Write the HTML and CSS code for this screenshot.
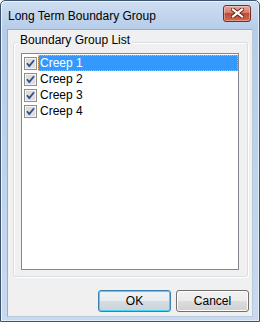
FILE: index.html
```html
<!DOCTYPE html>
<html lang="en">
<head>
  <meta charset="UTF-8">
  <title>Long Term Boundary Group</title>
  <link rel="stylesheet" href="styles.css">
</head>
<body>

  <div class="window">
    <div class="titlebar">
      <span class="title">Long Term Boundary Group</span>
      <button class="close" title="Close">
        <svg width="13" height="10" viewBox="0 0 13 10">
          <path d="M2 1.5 L11 8.5 M11 1.5 L2 8.5" stroke="#6b1f15" stroke-width="4" stroke-linecap="square"/>
          <path d="M2 1.5 L11 8.5 M11 1.5 L2 8.5" stroke="#ffffff" stroke-width="2.2" stroke-linecap="square"/>
        </svg>
      </button>
    </div>

    <div class="client">
      <div class="group">
        <span class="group-label">Boundary Group List</span>
        <ul class="list">
          <li class="item selected">
            <span class="check"><svg width="13" height="13" viewBox="0 0 13 13"><rect x="0.5" y="0.5" width="12" height="12" fill="#f4f4f4" stroke="#8e8f8f"/><rect x="2" y="2" width="9" height="9" fill="#dedede"/><path d="M3 6.2 L5.3 9 L10 3.2" fill="none" stroke="#2f4d8e" stroke-width="1.8"/></svg></span>
            <span class="label">Creep 1</span>
          </li>
          <li class="item">
            <span class="check"><svg width="13" height="13" viewBox="0 0 13 13"><rect x="0.5" y="0.5" width="12" height="12" fill="#f4f4f4" stroke="#8e8f8f"/><rect x="2" y="2" width="9" height="9" fill="#dedede"/><path d="M3 6.2 L5.3 9 L10 3.2" fill="none" stroke="#2f4d8e" stroke-width="1.8"/></svg></span>
            <span class="label">Creep 2</span>
          </li>
          <li class="item">
            <span class="check"><svg width="13" height="13" viewBox="0 0 13 13"><rect x="0.5" y="0.5" width="12" height="12" fill="#f4f4f4" stroke="#8e8f8f"/><rect x="2" y="2" width="9" height="9" fill="#dedede"/><path d="M3 6.2 L5.3 9 L10 3.2" fill="none" stroke="#2f4d8e" stroke-width="1.8"/></svg></span>
            <span class="label">Creep 3</span>
          </li>
          <li class="item">
            <span class="check"><svg width="13" height="13" viewBox="0 0 13 13"><rect x="0.5" y="0.5" width="12" height="12" fill="#f4f4f4" stroke="#8e8f8f"/><rect x="2" y="2" width="9" height="9" fill="#dedede"/><path d="M3 6.2 L5.3 9 L10 3.2" fill="none" stroke="#2f4d8e" stroke-width="1.8"/></svg></span>
            <span class="label">Creep 4</span>
          </li>
        </ul>
      </div>

      <div class="buttons">
        <button class="btn default">OK</button>
        <button class="btn">Cancel</button>
      </div>
    </div>
  </div>

</body>
</html>
```

FILE: styles.css
```css
body {
  margin: 0;
  background: #ffffff;
  font-family: "Liberation Sans", Arial, sans-serif;
  font-size: 12px;
}
.window {
  box-sizing: border-box;
  width: 260px;
  height: 322px;
  border: 1px solid #3d5470;
  border-radius: 5px 5px 0 0;
  padding: 0 6px 4px 6px;
  background: linear-gradient(to bottom, #cfdff2 0, #b6cce8 28px, #c0d4ec 60%, #c8daef 100%);
  box-shadow: inset 1px 1px 0 #eaf2fb, inset -1px -1px 0 #e2ecf7;
}
.titlebar {
  display: flex;
  align-items: center;
  height: 28px;
}
.title {
  padding-left: 1px;
  color: #000;
  line-height: 14px;
  margin-top: 1px;
}
.close {
  margin-left: auto;
  margin-right: 2px;
  margin-top: -4px;
  width: 28px;
  height: 17px;
  padding: 0;
  border: 1px solid #7a2a20;
  border-radius: 3px;
  background: linear-gradient(to bottom, #e8a799 0, #d77b6a 45%, #c24a35 50%, #cf6a50 100%);
  box-shadow: inset 0 0 0 1px rgba(255,255,255,0.35);
  display: flex;
  align-items: center;
  justify-content: center;
}
.client {
  border: 1px solid #98aecb;
  border-right-color: #b7c9df;
  border-bottom-color: #b7c9df;
  background: #f0f0f0;
  height: 286px;
  padding: 0;
}
.group {
  position: relative;
  margin: 12px 4px 0 5px;
  border: 1px solid #d5dfe5;
  border-radius: 3px;
  box-shadow: inset 1px 1px 0 #ffffff, 1px 1px 0 #ffffff;
  padding: 10px 8px 6px 7px;
}
.group-label {
  position: absolute;
  top: -10px;
  left: 4px;
  padding: 0 2px;
  line-height: 14px;
  background: #f0f0f0;
  color: #000;
}
.list {
  list-style: none;
  margin: 0;
  padding: 1px 0 0 0;
  height: 214px;
  border: 1px solid #828790;
  background: #ffffff;
}
.item {
  display: flex;
  align-items: center;
  height: 16px;
}
.check {
  width: 13px;
  height: 13px;
  margin-left: 2px;
  margin-right: 1px;
  display: flex;
}
.label {
  flex: 1;
  height: 16px;
  line-height: 16px;
  padding-left: 2px;
  color: #000;
}
.selected .label {
  background: #3399ff;
  color: #ffffff;
  outline: 1px dotted #e8b070;
  outline-offset: -1px;
}
.buttons {
  display: flex;
  justify-content: flex-end;
  gap: 5px;
  margin-top: 13px;
  padding-right: 3px;
}
.btn {
  width: 73px;
  height: 22px;
  padding: 0;
  font-family: "Liberation Sans", Arial, sans-serif;
  font-size: 12px;
  color: #000;
  border: 1px solid #707070;
  border-radius: 3px;
  background: linear-gradient(to bottom, #f2f2f2 0, #ebebeb 50%, #dddddd 50%, #cfcfcf 100%);
  box-shadow: inset 0 0 0 1px #fcfcfc;
}
.btn.default {
  border-color: #3c7fb1;
  box-shadow: inset 0 0 0 1px #48d5f8;
  background: linear-gradient(to bottom, #f0f3f5 0, #e6ecef 50%, #d6dde2 50%, #cbd3d8 100%);
}
```
